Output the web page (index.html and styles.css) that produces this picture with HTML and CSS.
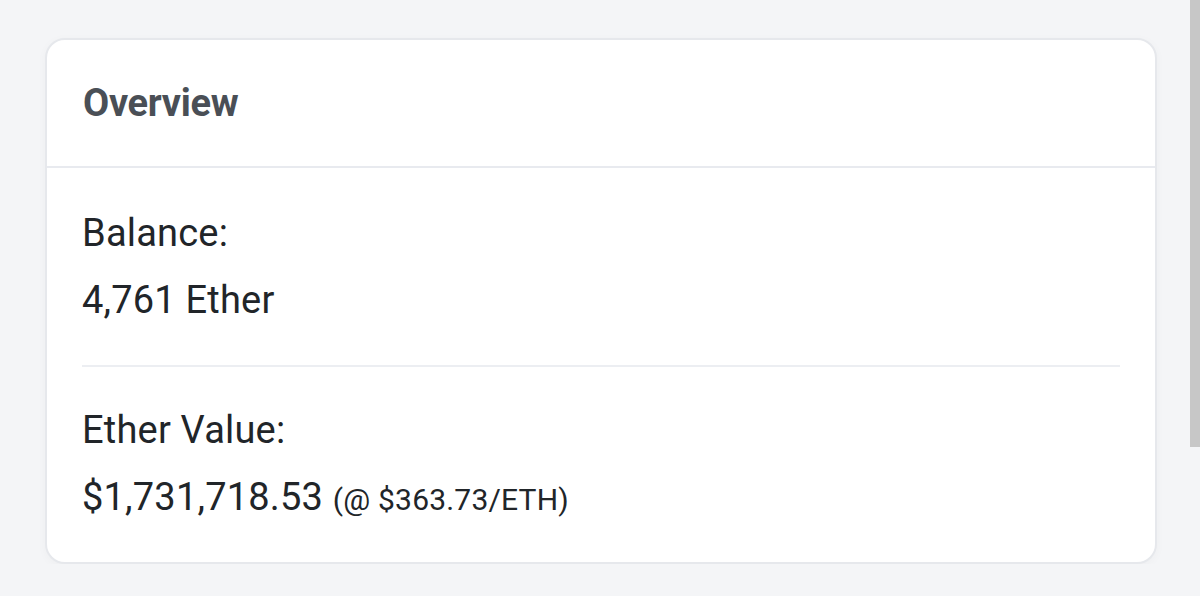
FILE: index.html
```html
<!DOCTYPE html>
<html lang="en">
<head>
<meta charset="utf-8">
<title>Overview</title>
<link rel="stylesheet" href="styles.css">
</head>
<body>
<main class="page">
  <section class="card">
    <header class="card-header">
      <h2 class="card-title">Overview</h2>
    </header>
    <div class="card-body">
      <div class="item">
        <div class="label">Balance:</div>
        <div class="value">4,761 Ether</div>
      </div>
      <hr class="divider">
      <div class="item">
        <div class="label">Ether Value:</div>
        <div class="value">$1,731,718.53 <span class="rate">(@ $363.73/ETH)</span></div>
      </div>
    </div>
  </section>
</main>
<div class="scrollbar"></div>
</body>
</html>
```

FILE: styles.css
```css
html, body {
  margin: 0;
  padding: 0;
  background: #f4f5f7;
  font-family: Roboto, "Liberation Sans", Arial, sans-serif;
  color: #212529;
  overflow: hidden;
}

.page {
  padding: 38px 0 0 45px;
  width: 1112px;
}

.card {
  background: #ffffff;
  border: 2px solid #e6e8ec;
  border-radius: 20px;
  box-shadow: 0 2px 10px rgba(0, 0, 0, 0.03);
  height: 522px;
  box-sizing: content-box;
}

.card-header {
  height: 126px;
  display: flex;
  align-items: center;
  padding: 0 36px;
  border-bottom: 2px solid #e8eaef;
}

.card-title {
  margin: 0;
  font-size: 38px;
  font-weight: 700;
  color: #4a4f56;
  letter-spacing: -0.3px;
  line-height: 1;
}

.card-body {
  padding: 32px 35px 0 35px;
}

.label, .value {
  font-size: 38px;
  line-height: 67px;
  height: 67px;
  letter-spacing: 0.2px;
  white-space: nowrap;
}

.rate {
  font-size: 30px;
}

.divider {
  border: 0;
  height: 2px;
  background: #eceef2;
  margin: 31px 0 30px 0;
}

.scrollbar {
  position: fixed;
  top: 0;
  right: 0;
  width: 10px;
  height: 447px;
  background: #c7c7c7;
}
```
